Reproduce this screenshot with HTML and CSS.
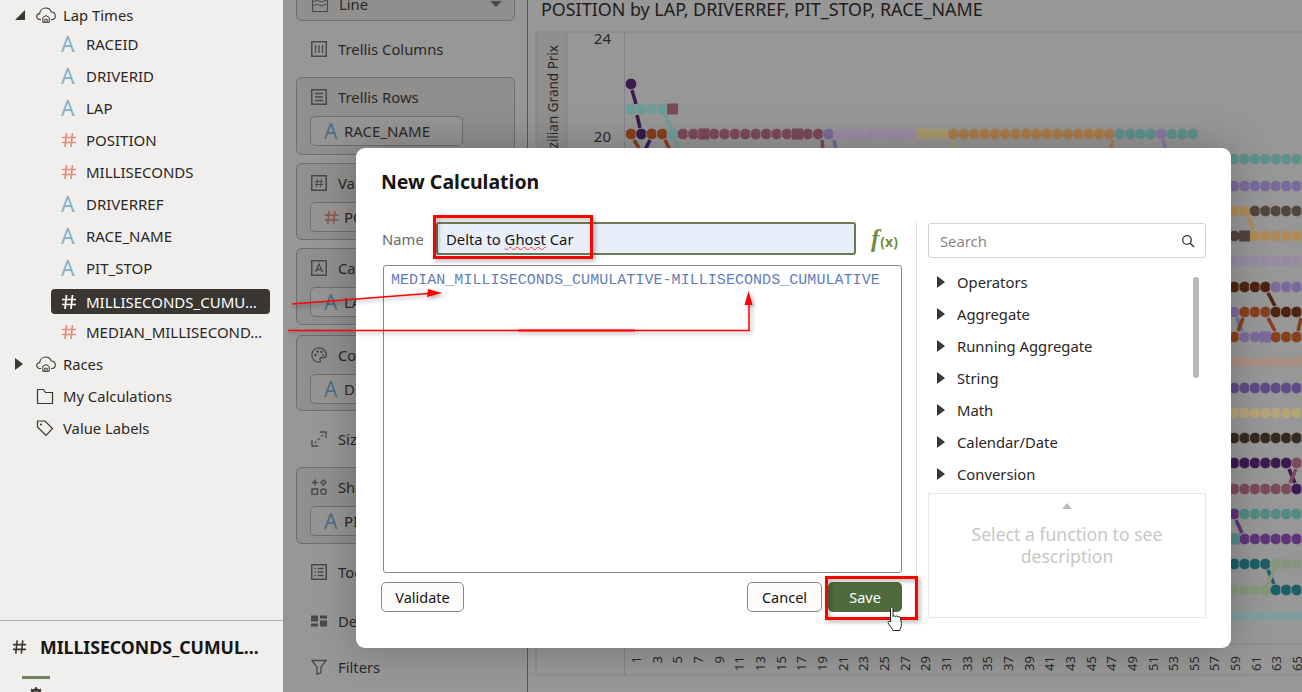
FILE: index.html
```html
<!DOCTYPE html>
<html lang="en">
<head>
    <meta charset="UTF-8">
    <meta name="viewport" content="width=device-width, initial-scale=1.0">
    <title>New Calculation</title>
    <link rel="stylesheet" href="styles.css">
</head>
<body>

<!-- shared icons -->
<svg class="icon-defs" width="0" height="0">
    <symbol id="i-hash" viewBox="0 0 16 16">
        <path d="M5.5 1 4 15M11.5 1 10 15M1 5.5h14M1 10.5h14" fill="none" stroke="currentColor" stroke-width="1.7"/>
    </symbol>
    <symbol id="i-cloud" viewBox="0 0 20 16">
        <path d="M5 12.5H3.6C2 12.500 .7 11.200 .7 9.500S2 6.600 3.600 6.600C4 3.300 6.600 1 9.700 1c2.600 0 4.800 1.600 5.600 4 2.300.1 4 1.900 4 4 0 2-1.500 3.500-3.500 3.500H15" fill="none" stroke="currentColor" stroke-width="1.100"/>
        <path d="M6.800 15.300V10.500L10 8.500l3.200 2v4.800zM8.800 15.300v-3h2.400v3" fill="none" stroke="currentColor" stroke-width="1"/>
    </symbol>
</svg>

<aside class="sidebar">
    <div class="tree">
        <div class="tree-row first"><span class="caret-open"></span><svg class="cloud"><use href="#i-cloud"/></svg>Lap Times</div>
        <div class="field"><span class="type-a">A</span><span class="field-name">RACEID</span></div>
        <div class="field"><span class="type-a">A</span><span class="field-name">DRIVERID</span></div>
        <div class="field"><span class="type-a">A</span><span class="field-name">LAP</span></div>
        <div class="field"><svg class="type-hash"><use href="#i-hash"/></svg><span class="field-name">POSITION</span></div>
        <div class="field"><svg class="type-hash"><use href="#i-hash"/></svg><span class="field-name">MILLISECONDS</span></div>
        <div class="field"><span class="type-a">A</span><span class="field-name">DRIVERREF</span></div>
        <div class="field"><span class="type-a">A</span><span class="field-name">RACE_NAME</span></div>
        <div class="field"><span class="type-a">A</span><span class="field-name">PIT_STOP</span></div>
        <div class="field selected"><svg class="type-hash"><use href="#i-hash"/></svg><span class="field-name">MILLISECONDS_CUMU…</span></div>
        <div class="field"><svg class="type-hash"><use href="#i-hash"/></svg><span class="field-name">MEDIAN_MILLISECOND…</span></div>
        <div class="tree-row"><span class="caret-closed"></span><svg class="cloud"><use href="#i-cloud"/></svg>Races</div>
        <div class="tree-row">
            <span class="caret-none"></span>
            <svg class="tree-icon" viewBox="0 0 18 18"><path d="M1.500 2.500h6l2 3h7v11h-15z" fill="none" stroke="currentColor" stroke-width="1.200"/></svg>
            My Calculations
        </div>
        <div class="tree-row">
            <span class="caret-none"></span>
            <svg class="tree-icon" viewBox="0 0 18 18"><path d="M1.500 2h7.500l7.500 7.500-6.500 7L1.500 8z" fill="none" stroke="currentColor" stroke-width="1.200"/><circle cx="5" cy="5.500" r="1" fill="currentColor"/></svg>
            Value Labels
        </div>
    </div>
    <div class="props">
        <div class="props-title"><svg class="props-hash"><use href="#i-hash"/></svg>MILLISECONDS_CUMUL...</div>
        <div class="props-tab"></div>
        <div class="props-tabs">
            <svg class="gear" viewBox="0 0 14 14"><circle cx="7" cy="7" r="4.500" fill="none" stroke="currentColor" stroke-width="2.500"/><path d="M7 0v14M0 7h14M2 2l10 10M12 2 2 12" stroke="currentColor" stroke-width="1.500"/></svg>
            <span>#</span>
        </div>
    </div>
</aside>

<section class="panel">
    <div class="select-box">
        <svg class="shelf-icon" viewBox="0 0 16 16"><path d="M.5.500h15v15H.5zM1 6l4-2 4 2 6-2M1 10l4-2 4 2 6-2" fill="none" stroke="currentColor"/></svg>
        <span>Line</span>
        <span class="select-arrow"></span>
    </div>
    <div class="panel-row columns-row">
        <svg class="shelf-icon" viewBox="0 0 16 16"><path d="M.75.750h14.500v14.500H.75z" fill="none" stroke="currentColor" stroke-width="1.500"/><path d="M4.500 4v8M8 4v8M11.500 4v8" stroke="currentColor" stroke-width="1.300"/></svg>
        Trellis Columns
    </div>
    <div class="shelf">
        <div class="shelf-head">
            <svg class="shelf-icon" viewBox="0 0 16 16"><path d="M.75.750h14.500v14.500H.75z" fill="none" stroke="currentColor" stroke-width="1.500"/><path d="M4 4.500h8M4 8h8M4 11.500h8" stroke="currentColor" stroke-width="1.300"/></svg>
            Trellis Rows
        </div>
        <div class="pill"><span class="pill-a">A</span>RACE_NAME</div>
    </div>
    <div class="shelf">
        <div class="shelf-head">
            <svg class="shelf-icon" viewBox="0 0 16 16"><path d="M.75.750h14.500v14.500H.75z" fill="none" stroke="currentColor" stroke-width="1.500"/><path d="M6.500 4 5.500 12M10.500 4l-1 8M4 6.500h8M4 9.500h8" stroke="currentColor"/></svg>
            Values
        </div>
        <div class="pill"><svg class="pill-hash"><use href="#i-hash"/></svg>POSITION</div>
    </div>
    <div class="shelf">
        <div class="shelf-head">
            <svg class="shelf-icon" viewBox="0 0 16 16"><path d="M.75.750h14.500v14.500H.75z" fill="none" stroke="currentColor" stroke-width="1.500"/><path d="M4.500 12 8 4l3.500 8M5.800 9.500h4.400" fill="none" stroke="currentColor" stroke-width="1.300"/></svg>
            Category
        </div>
        <div class="pill"><span class="pill-a">A</span>LAP</div>
    </div>
    <div class="shelf color-shelf">
        <div class="shelf-head">
            <svg class="shelf-icon" viewBox="0 0 16 16"><path d="M8 .800C3.800.800.800 4 .800 8s3.200 7.200 7 7.200c1.800 0 2-1.200 1.400-2.200-.7-1.200 0-2.500 1.400-2.500h2.400c1.400 0 2.400-1 2.400-2.500C15.200 3.600 12 .800 8 .800z" fill="none" stroke="currentColor" stroke-width="1.300"/><circle cx="4.500" cy="8" r="1.300" fill="currentColor"/><circle cx="6.500" cy="4.500" r="1.300" fill="currentColor"/><circle cx="10.500" cy="4.800" r="1.300" fill="currentColor"/><circle cx="12" cy="8" r="1" fill="currentColor"/></svg>
            Color
        </div>
        <div class="pill"><span class="pill-a">A</span>DRIVERREF</div>
    </div>
    <div class="panel-row size-row">
        <svg class="shelf-icon" viewBox="0 0 16 16"><path d="M1 9v6h6M9 1h6v6M4 12l1.500-1.500M7 9l1.500-1.500M10.500 5.500 12 4" fill="none" stroke="currentColor" stroke-width="1.300"/></svg>
        Size
    </div>
    <div class="shelf">
        <div class="shelf-head">
            <svg class="shelf-icon" viewBox="0 0 16 16"><path d="M4 .500v6M1 3.500h6" stroke="currentColor" stroke-width="1.500"/><path d="m12.500 1 2.500 2.500L12.500 6 10 3.500zM1 10h5.500v5.500H1z" fill="none" stroke="currentColor" stroke-width="1.400"/><circle cx="12.500" cy="12.700" r="2.700" fill="none" stroke="currentColor" stroke-width="1.400"/></svg>
            Shape
        </div>
        <div class="pill"><span class="pill-a">A</span>PIT_STOP</div>
    </div>
    <div class="panel-row tooltip-row">
        <svg class="shelf-icon" viewBox="0 0 16 16"><path d="M.75.750h14.500v14.500H.75z" fill="none" stroke="currentColor" stroke-width="1.500"/><path d="M3.500 4.500h1.500M3.500 8h1.500M3.500 11.500h1.500M6.500 4.500h6M6.500 8h6M6.500 11.500h6" stroke="currentColor" stroke-width="1.300"/></svg>
        Tooltip
    </div>
    <div class="panel-row detail-row">
        <svg class="shelf-icon" viewBox="0 0 16 16"><path d="M0 1h7v6H0zM9 1h7v3H9zM0 9h7v3H0zM9 6h7v6H9z" fill="currentColor" transform="translate(0 1.500)"/></svg>
        Detail
    </div>
    <div class="panel-row filters-row">
        <svg class="shelf-icon" viewBox="0 0 16 16"><path d="M.800 1.500h14.400L10 8v5.500l-4 2V8z" fill="none" stroke="currentColor" stroke-width="1.300"/></svg>
        Filters
    </div>
</section>

<section class="chart">
    <h3 class="chart-title">POSITION by LAP, DRIVERREF, PIT_STOP, RACE_NAME</h3>
    <svg id="plot" class="plot" viewBox="528 0 774 692"></svg>
</section>

<div class="modal">
    <h2 class="modal-title">New Calculation</h2>
    <div class="modal-body">
        <div class="editor-col">
            <div class="name-row">
                <label class="name-label">Name</label>
                <div class="name-input">Delta to <span class="misspelt">Ghost</span> Car</div>
                <div class="fx"><i>f</i><b>(x)</b></div>
            </div>
            <div class="expression">MEDIAN_MILLISECONDS_CUMULATIVE-MILLISECONDS_CUMULATIVE</div>
            <div class="modal-buttons">
                <button class="btn" type="button">Validate</button>
                <span class="btn-space"></span>
                <button class="btn cancel" type="button">Cancel</button>
                <button class="btn save" type="button">Save</button>
            </div>
        </div>
        <div class="catalog-col">
            <div class="search">
                <span>Search</span>
                <svg viewBox="0 0 14 14" width="14" height="14"><circle cx="6" cy="6" r="4.300" fill="none" stroke="currentColor" stroke-width="1.300"/><path d="m9.200 9.200 3.800 3.800" stroke="currentColor" stroke-width="1.500"/></svg>
            </div>
            <div class="functions">
                <div class="fn"><span class="caret-closed"></span>Operators</div>
                <div class="fn"><span class="caret-closed"></span>Aggregate</div>
                <div class="fn"><span class="caret-closed"></span>Running Aggregate</div>
                <div class="fn"><span class="caret-closed"></span>String</div>
                <div class="fn"><span class="caret-closed"></span>Math</div>
                <div class="fn"><span class="caret-closed"></span>Calendar/Date</div>
                <div class="fn"><span class="caret-closed"></span>Conversion</div>
                <div class="scrollbar"></div>
            </div>
            <div class="description">
                <span class="desc-caret"></span>
                <p>Select a function to see description</p>
            </div>
        </div>
    </div>
</div>

<!-- red tutorial marks on top of the screenshot -->
<svg class="marks" viewBox="0 0 1302 692">
    <rect x="434.500" y="216.500" width="157" height="41" fill="none" stroke="#f00" stroke-width="3"/>
    <rect x="826.500" y="577.500" width="90" height="41" fill="none" stroke="#f00" stroke-width="3"/>
    <path d="M292 304 428 293.500" stroke="#f00" stroke-width="1.600" fill="none"/>
    <path d="m442 293-15 4 1-8z" fill="#f00"/>
    <path d="M288 330.500H749V302" stroke="#f00" stroke-width="1.500" fill="none"/>
    <path d="M518 330.500H635" stroke="#f00" stroke-width="2.200" fill="none"/>
    <path d="m748.500 291 4 14h-8z" fill="#f00"/>
</svg>
<svg class="hand" viewBox="0 0 17 27">
    <path d="M3.500 2.500c0-2 2.500-2 2.500 0v8c.5-1 2.300-1 2.500.2.500-1 2.300-.8 2.500.4.600-.8 2.300-.5 2.400.7l1 5.700c.3 3-1 5-1.800 7H6c-1-2-3.500-5-4.800-7.500-.6-1.300.8-2.300 2.300-1z" fill="#fff" stroke="#222" stroke-width="1"/>
</svg>

<script>
    // Lap position chart, only the parts that show around the dialog
    const svg = document.getElementById('plot');
    const NS = 'http://www.w3.org/2000/svg';

    function lapX(lap) {
        return 631 + (lap - 1) * 10.4;
    }

    function add(tag, attrs, text) {
        const el = document.createElementNS(NS, tag);
        for (const key in attrs) el.setAttribute(key, attrs[key]);
        if (text) el.textContent = text;
        svg.appendChild(el);
        return el;
    }

    function dot(x, y, fill) {
        add('circle', { cx: x, cy: y, r: 5.800, fill: fill, stroke: '#979797', 'stroke-width': 0.8 });
    }

    const teal = '#5f908a', purple = '#7a6a9a', tan = '#b08a55', brown = '#52453c', lilac = '#978aa0';
    const rust = '#86401e', umber = '#4d2410', violet = '#5f4a85', sand = '#b5a478', ink = '#352a22';
    const plum = '#3a1b4f', rose = '#7b4a58', magenta = '#5e3378', pine = '#1d5f66', sage = '#85977a';

    // [y, [from lap, to lap, colour], ...]
    const rows = [
        [84, [1, 1, plum]],
        [109, [1, 4, '#6f9d9a']],
        [134, [1, 1, rust], [2, 2, plum], [3, 4, rust], [5, 5, '#6f9d9a'], [6, 19, rose], [20, 20, purple], [21, 28, '#9c8aa5'],
            [30, 31, '#a99a6b'], [32, 47, '#a97c4a'], [48, 51, teal], [52, 52, '#8c74a5'], [53, 55, teal]],
        [159, [59, 66, teal]],
        [186, [59, 66, purple]],
        [211, [59, 60, tan], [61, 66, brown]],
        [236, [59, 59, brown], [61, 66, tan]],
        [261, [59, 66, lilac]],
        [287, [59, 62, umber], [63, 66, purple]],
        [312, [59, 59, purple], [60, 62, rust], [63, 66, umber]],
        [337, [59, 59, rust], [60, 61, purple], [63, 66, rust]],
        [362, [59, 66, '#a98f80']],
        [388, [59, 66, violet]],
        [413, [59, 66, sand]],
        [438, [59, 66, ink]],
        [463, [59, 64, plum], [65, 66, rose]],
        [489, [59, 64, rose], [65, 66, plum]],
        [514, [59, 59, magenta], [60, 66, '#548a83']],
        [539, [60, 66, magenta]],
        [564, [59, 62, pine], [63, 66, sage]],
        [590, [59, 62, sage], [63, 66, pine]],
        [616, [59, 66, '#7f9da0']]
    ];

    // [lap, y, colour]
    const squares = [
        [5, 109, rose], [8, 134, rose], [17, 134, rose], [29, 134, '#a99a6b'],
        [60, 236, brown], [62, 337, purple], [59, 539, '#548a83']
    ];

    // [x1, y1, x2, y2, colour]
    const links = [
        [632, 90, 636, 104, plum], [637, 115, 640, 128, plum], [665, 115, 672, 129, '#6f9d9a'],
        [634, 140, 640, 150, rust], [650, 140, 645, 150, plum], [665, 140, 670, 150, rust], [676, 140, 678, 150, '#6f9d9a'],
        [822, 140, 823, 150, rose], [834, 140, 836, 150, purple], [919, 140, 922, 150, '#9c8aa5'],
        [952, 140, 955, 150, '#a99a6b'], [1113, 140, 1110, 150, '#a97c4a'], [1163, 140, 1166, 150, '#8c74a5'],
        [1248, 216, 1253, 229, tan], [1268, 293, 1275, 306, umber], [1268, 318, 1275, 331, rust],
        [1237, 318, 1242, 331, purple], [1243, 318, 1238, 331, rust], [1301, 318, 1298, 331, rust],
        [1289, 469, 1295, 483, plum], [1296, 469, 1290, 483, rose], [1236, 520, 1242, 533, magenta],
        [1268, 570, 1274, 584, pine], [1274, 570, 1268, 584, sage]
    ];

    // frame
    add('rect', { x: 536, y: 32, width: 31, height: 612, fill: '#908f8e' });
    add('path', { d: 'M536 32H1302M536 32V675M567 32V644M624.500 32V675M536 644H1302M536 675H1302', stroke: '#858585', fill: 'none' });
    add('text', { x: 0, y: 0, class: 'row-label', transform: 'translate(558 45) rotate(-90)', 'text-anchor': 'end' }, 'Brazilian Grand Prix');
    add('text', { x: 611, y: 44, class: 'axis', 'text-anchor': 'end' }, '24');
    add('text', { x: 611, y: 142, class: 'axis', 'text-anchor': 'end' }, '20');

    for (let lap = 1; lap <= 65; lap += 2) {
        const x = 637 + (lap - 1) * 10.33 + 4;
        add('text', { class: 'axis small', transform: 'translate(' + x + ' 656) rotate(-90)', 'text-anchor': 'end' }, String(lap));
    }

    links.forEach(function (l) {
        add('line', { x1: l[0], y1: l[1], x2: l[2], y2: l[3], stroke: l[4], 'stroke-width': 3.5 });
    });

    rows.forEach(function (row) {
        row.slice(1).forEach(function (run) {
            for (let lap = run[0]; lap <= run[1]; lap++) {
                dot(lapX(lap), row[0], run[2]);
            }
        });
    });

    // this one sits on top of its neighbour
    dot(lapX(64), 463, plum);

    squares.forEach(function (s) {
        add('rect', { x: lapX(s[0]) - 5.500, y: s[1] - 5.500, width: 11, height: 11, fill: s[2] });
    });
</script>

</body>
</html>
```

FILE: styles.css
```css
* {
    box-sizing: border-box;
}
html, body {
    height: 692px;
}
body {
    margin: 0;
    display: flex;
    overflow: hidden;
    position: relative;
    background-color: #979797;
    color: #2a2826;
    font-family: "Noto Sans", Arial, sans-serif;
    font-size: 14.8px;
}
.icon-defs {
    position: absolute;
}

/* data panel */
.sidebar {
    width: 283px;
    flex: none;
    display: flex;
    flex-direction: column;
    background-color: #f1efed;
    color: #2b2724;
}
.tree {
    flex: 1;
    margin-top: -2px;
}
.tree-row {
    height: 32px;
    display: flex;
    align-items: center;
    padding-left: 15px;
}
.tree-row.first {
    height: 30px;
    padding-top: 4px;
}
.caret-open {
    width: 0;
    height: 0;
    border-style: solid;
    border-width: 0 0 10px 10px;
    border-color: transparent transparent #3a3631 transparent;
    margin-right: 11px;
}
.caret-closed {
    width: 0;
    height: 0;
    border-style: solid;
    border-width: 6px 0 6px 8px;
    border-color: transparent transparent transparent #3a3631;
    margin-right: 13px;
}
.caret-none {
    width: 8px;
    margin-right: 13px;
}
.cloud {
    width: 20px;
    height: 16px;
    margin-right: 7px;
    color: #3a3631;
}
.tree-icon {
    width: 18px;
    height: 18px;
    margin-right: 9px;
    color: #3a3631;
}
.field {
    height: 32px;
    width: 219px;
    margin-left: 51px;
    padding: 0 1px 0 10px;
    display: flex;
    align-items: center;
    font-size: 15px;
}
.field.selected {
    height: 25px;
    margin-top: 5px;
    margin-bottom: 2px;
    padding-right: 5px;
    background-color: #3a3631;
    color: #fff;
    border-radius: 4px;
}
.field-name {
    white-space: nowrap;
}
.type-a {
    width: 25px;
    flex: none;
    color: #82b2c8;
    font-size: 21px;
    font-weight: 400;
}
.type-hash {
    width: 16px;
    height: 16px;
    margin-right: 9px;
    flex: none;
    color: #e28f78;
}
.selected .type-hash {
    color: #fff;
}
.props {
    height: 72px;
    border-top: 1px solid #aeaca9;
    overflow: hidden;
}
.props-title {
    display: flex;
    align-items: center;
    height: 55px;
    padding: 0 0 3px 12px;
    font-size: 17.7px;
    font-weight: 700;
    color: #161513;
}
.props-hash {
    width: 15px;
    height: 16px;
    margin-right: 13px;
    color: #3a3631;
}
.props-tab {
    width: 28px;
    height: 3px;
    margin-left: 22px;
    background-color: #6f8553;
}
.props-tabs {
    display: flex;
    padding: 8px 0 0 29px;
    color: #3a3631;
}
.gear {
    width: 14px;
    height: 14px;
    margin-right: 29px;
}

/* grammar panel, dimmed by the dialog */
.panel {
    width: 245px;
    flex: none;
    padding: 0 12px 0 13px;
    border-right: 1px solid #4f5f45;
    color: #2a2826;
}
.shelf-icon {
    width: 16px;
    height: 16px;
    margin-right: 11px;
    flex: none;
    color: #4a4947;
}
.select-box {
    height: 34px;
    margin-top: -13px;
    padding-left: 15px;
    display: flex;
    align-items: center;
    border: 1px solid #6f6e6c;
    border-radius: 6px;
    background-color: #918f8d;
}
.select-arrow {
    margin-left: auto;
    margin-right: 12px;
    width: 0;
    height: 0;
    border-style: solid;
    border-width: 6px 6px 0 6px;
    border-color: #4a4947 transparent transparent transparent;
}
.panel-row {
    display: flex;
    align-items: center;
    padding-left: 15px;
}
.columns-row {
    height: 56px;
}
.size-row {
    height: 56px;
}
.tooltip-row {
    height: 56px;
}
.detail-row {
    height: 42px;
}
.filters-row {
    height: 50px;
}
.shelf {
    height: 77px;
    margin-bottom: 8px;
    padding: 7px 13px;
    border: 1px solid #6f6e6c;
    border-radius: 6px;
    background-color: #918f8d;
}
.columns-row + .shelf {
    height: 78px;
}
.size-row + .shelf {
    margin-bottom: 0;
}
.color-shelf {
    height: 76px;
    margin-top: 10px;
    margin-bottom: 0;
}
.shelf-head {
    height: 24px;
    display: flex;
    align-items: center;
    margin-left: 1px;
    margin-bottom: 7px;
}
.pill {
    width: 153px;
    height: 30px;
    padding-left: 13px;
    display: flex;
    align-items: center;
    border: 1px solid #6f6e6c;
    border-radius: 5px;
    background-color: #979594;
    font-size: 15px;
}
.pill-a {
    width: 20px;
    flex: none;
    color: #4c7089;
    font-size: 21px;
}
.pill-hash {
    width: 15px;
    height: 15px;
    margin-right: 5px;
    flex: none;
    color: #8d5a4d;
}

/* chart, dimmed by the dialog */
.chart {
    flex: 1;
    position: relative;
    min-width: 0;
}
.chart-title {
    margin: -1px 0 0 0;
    padding: 0 0 0 13px;
    font-size: 17.9px;
    font-weight: 400;
    line-height: 20px;
    color: #1f1d1b;
    white-space: nowrap;
}
.plot {
    position: absolute;
    left: 0;
    top: 0;
    width: 774px;
    height: 692px;
}
.axis {
    font-family: "Noto Sans", Arial, sans-serif;
    font-size: 15px;
    fill: #2a2826;
}
.axis.small {
    font-size: 13px;
}
.row-label {
    font-family: "Noto Sans", Arial, sans-serif;
    font-size: 13.5px;
    fill: #2a2826;
}

/* dialog */
.modal {
    position: absolute;
    left: 356px;
    top: 148px;
    width: 875px;
    height: 500px;
    padding: 20px 25px 0 25px;
    border-radius: 9px;
    background-color: #fff;
    box-shadow: 0 0 40px rgba(0, 0, 0, 0.25);
}
.modal-title {
    margin: 0 0 26px 0;
    font-size: 19.5px;
    font-weight: 700;
    line-height: 28px;
    color: #161513;
}
.modal-body {
    display: flex;
}
.editor-col {
    width: 521px;
    flex: none;
}
.name-row {
    height: 33px;
    display: flex;
    align-items: center;
}
.name-label {
    width: 55px;
    padding-left: 1px;
    color: #6b6965;
}
.name-input {
    width: 420px;
    height: 33px;
    padding-left: 8px;
    display: flex;
    align-items: center;
    white-space: pre;
    background-color: #e8effb;
    border: 2px solid #6b7a55;
    border-radius: 3px;
    color: #161513;
}
.misspelt {
    text-decoration: underline wavy #f03a30 1px;
    text-underline-offset: 1px;
}
.fx {
    margin-left: 15px;
    color: #6f8f3f;
    display: flex;
    align-items: baseline;
}
.fx i {
    font-family: "Liberation Serif", serif;
    font-size: 25px;
    font-weight: 700;
    line-height: 30px;
}
.fx b {
    font-size: 14px;
    margin-left: 1px;
}
.expression {
    width: 519px;
    height: 308px;
    margin: 10px 0 0 2px;
    padding: 7px 7px;
    border: 1px solid #8a8885;
    border-radius: 3px;
    font-family: "Liberation Mono", monospace;
    font-size: 15px;
    letter-spacing: 0.05px;
    line-height: 16px;
    color: #5f7dbb;
}
.modal-buttons {
    display: flex;
    gap: 6px;
    margin-top: 9px;
}
.btn-space {
    flex: 1;
}
.btn {
    width: 83px;
    height: 30px;
    padding: 0;
    border: 1px solid #8a8885;
    border-radius: 5px;
    background-color: #fcfbfa;
    color: #161513;
    font-family: inherit;
    font-size: 14.5px;
}
.btn.cancel {
    width: 75px;
}
.btn.save {
    width: 74px;
    border: none;
    background-color: #4f6a3c;
    color: #fff;
}
.catalog-col {
    width: 290px;
    margin-left: 14px;
    padding: 1px 0 0 11px;
    border-left: 1px solid #e4e3e1;
    height: 396px;
    display: flex;
    flex-direction: column;
}
.search {
    width: 278px;
    height: 35px;
    flex: none;
    padding: 0 10px 0 11px;
    display: flex;
    align-items: center;
    justify-content: space-between;
    border: 1px solid #d5d3d1;
    border-radius: 3px;
    color: #8a8885;
}
.search svg {
    color: #3a3631;
}
.functions {
    position: relative;
    width: 278px;
    height: 235px;
    flex: none;
    padding-top: 8px;
    overflow: hidden;
}
.fn {
    height: 32px;
    padding-left: 9px;
    display: flex;
    align-items: center;
    color: #2b2724;
}
.fn .caret-closed {
    margin-right: 12px;
}
.scrollbar {
    position: absolute;
    right: 7px;
    top: 19px;
    width: 6px;
    height: 101px;
    border-radius: 3px;
    background-color: #bdb8b3;
}
.description {
    width: 278px;
    height: 125px;
    flex: none;
    padding-top: 9px;
    text-align: center;
    border: 1px solid #e9e8e6;
}
.desc-caret {
    display: block;
    width: 0;
    height: 0;
    margin: 0 auto;
    border-style: solid;
    border-width: 0 5px 6px 5px;
    border-color: transparent transparent #bfbdba transparent;
}
.description p {
    margin: 14px auto 0 auto;
    width: 220px;
    font-size: 17.6px;
    line-height: 22px;
    color: #c9c6c3;
}

/* overlays */
.marks {
    position: absolute;
    left: 0;
    top: 0;
    width: 1302px;
    height: 692px;
    pointer-events: none;
    filter: drop-shadow(2px 2px 2px rgba(0, 0, 0, 0.35));
}
.hand {
    position: absolute;
    left: 887px;
    top: 606px;
    width: 17px;
    height: 27px;
}
```
